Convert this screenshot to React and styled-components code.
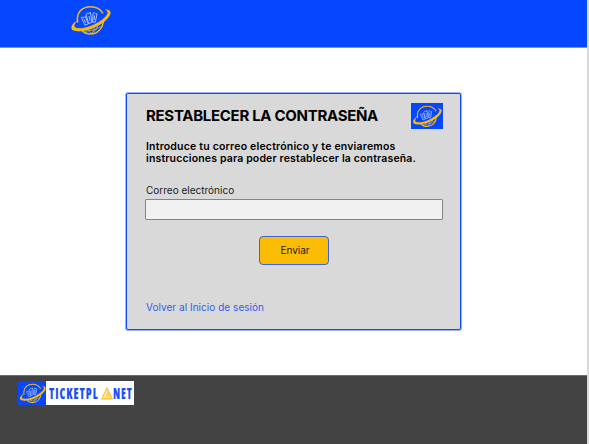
import React from "react";
import styled, { createGlobalStyle } from "styled-components";

const GlobalStyle = createGlobalStyle`
  *, *::before, *::after { box-sizing: border-box; }
  body { margin: 0; background: #fff; overflow: hidden; }
`;

const Page = styled.div`
  display: flex;
  flex-direction: column;
  width: 589px;
  height: 444px;
  border-right: 2px solid #d9d9d9;
  background: #fff;
  color: #000;
  font-family: Inter, "Noto Sans", sans-serif;
`;

const Header = styled.header`
  flex: 0 0 48px;
  padding: 5px 0 0 70px;
  background: #0546ff;
  border-bottom: 1px solid #6f93fb;
`;

const Main = styled.main`
  flex: 1;
  padding: 45px 0 0 126px;
`;

const Card = styled.section`
  width: 335px;
  height: 237px;
  padding: 9px 17px 0 19px;
  background: #d9d9d9;
  border: 1px solid #0f4bfb;
  border-radius: 2px;
  box-shadow: 0 0 0 1px rgba(34, 86, 245, 0.45);
`;

const CardHeader = styled.div`
  display: flex;
  justify-content: space-between;
  height: 38px;
`;

const Title = styled.h1`
  margin: 3px 0 0;
  font-size: 15px;
  line-height: 20px;
  font-weight: 700;
  letter-spacing: -0.3px;
  white-space: nowrap;
`;

const LogoTile = styled.div`
  display: flex;
  align-items: center;
  justify-content: center;
  flex: none;
  width: ${(p) => p.$width}px;
  height: ${(p) => p.$height}px;
  background: #0546ff;
`;

const Intro = styled.p`
  margin: 0;
  font-size: 10.5px;
  line-height: 12px;
  font-weight: 600;
  white-space: nowrap;
`;

const IntroLine = styled.span`
  display: block;
  letter-spacing: ${(p) => p.$spacing}px;
`;

const Label = styled.label`
  display: block;
  margin-top: 18px;
  font-size: 10px;
  line-height: 14px;
  color: #222;
`;

const Input = styled.input`
  display: block;
  width: 298px;
  height: 21px;
  margin: 2px 0 0 -1px;
  padding: 0 6px;
  background: #f1f1f1;
  border: 1px solid #858585;
  border-radius: 1px;
  font: inherit;
  font-size: 10px;
  outline: none;
`;

const Button = styled.button`
  display: block;
  width: 70px;
  height: 29px;
  margin: 16px 0 0 113px;
  padding: 0 0 0 2px;
  background: #fbbc05;
  border: 1px solid #3f66cf;
  border-radius: 4px;
  color: #222;
  font-family: inherit;
  font-size: 10px;
  line-height: 27px;
`;

const BackLink = styled.a`
  display: block;
  margin-top: 35px;
  font-size: 10px;
  line-height: 14px;
  letter-spacing: 0.04px;
  color: #2f60f4;
  text-decoration: none;
`;

const Footer = styled.footer`
  flex: 0 0 69px;
  padding: 5px 0 0 18px;
  background: #434343;
  border-top: 1px solid #6c6c6c;
`;

const Brand = styled.div`
  display: flex;
  width: 116px;
  height: 24px;
  background: #fff;
`;

const Drawing = styled.svg`
  display: block;
  flex: none;
`;

function Globe({ width, height }) {
  return (
    <Drawing width={width} height={height} viewBox="6 9 123 92" preserveAspectRatio="none" fill="none">
      <path
        d="M29 61 C24 33 41 14 68 14 C85 14 98 22 105 34 M107 53 C104 80 88 94 68 95 C57 95 48 91 42 85"
        stroke="#f4b81e" strokeWidth="4.5"
      />
      <path d="M50 87 Q78 87 104 71 M60 80 Q64 90 70 94 Q86 85 91 68 M79 76 Q80 86 70 94" stroke="#dfb23a" strokeWidth="2.4" />
      <path
        d="M111 23 C133 21 132 38 113 55 C88 77 45 92 18 85 C5 81 9 66 28 55 C17 67 15 76 28 78 C52 81 90 65 110 46 C121 36 123 27 111 23Z"
        fill="#fbbc05" stroke="#fbbc05" strokeWidth="0.6"
      />
      <path
        d="M40 46 L45 45 L47 47 L52 43 L61 65 L51 69Z M54 37 L59 33 L62 36 L67 30 L72 60 L62 64Z M75 34 L79 31 L83 35 L87 35 L82 60 L74 60Z M48 51 L53 62 M63 42 L66 56 M80 40 L78 54"
        stroke="#c3d3ff" strokeWidth="2.6" strokeLinejoin="round"
      />
    </Drawing>
  );
}

const Wordmark = styled.div`
  display: flex;
  align-items: center;
  padding-left: 3px;
  color: #1850f5;
  font-family: "Open Sans", sans-serif;
  font-size: 16px;
  font-weight: 800;
  font-stretch: 75%;
  letter-spacing: 1.4px;
  line-height: 24px;
`;

const WordPart = styled.span`
  display: block;
  flex: none;
  width: ${(p) => p.$width}px;
  white-space: nowrap;
`;

const Condensed = styled.span`
  display: inline-block;
  transform: scaleX(${(p) => p.$scale});
  transform-origin: left center;
`;

function PyramidMark() {
  return (
    <Drawing width="12" height="13" viewBox="0 0 12 13" fill="none" stroke="#f6c436">
      <path d="M6 1.2 L11 11.7 H1 Z" strokeWidth="1.4" />
      <path d="M6 4.2 L8.8 9.8 H3.2 M5 8 L6 6.4 L7 8 Z" strokeWidth="1" />
    </Drawing>
  );
}

export default function App() {
  return (
    <>
      <GlobalStyle />
      <Page>
        <Header>
          <Globe width={41} height={31} />
        </Header>
        <Main>
          <Card>
            <CardHeader>
              <Title>RESTABLECER LA CONTRASEÑA</Title>
              <LogoTile $width={32} $height={26}>
                <Globe width={30} height={23} />
              </LogoTile>
            </CardHeader>
            <Intro>
              <IntroLine $spacing={0.2}>Introduce tu correo electrónico y te enviaremos</IntroLine>
              <IntroLine $spacing={0.16}>instrucciones para poder restablecer la contraseña.</IntroLine>
            </Intro>
            <Label htmlFor="email">Correo electrónico</Label>
            <Input id="email" type="email" />
            <Button type="button">Enviar</Button>
            <BackLink href="#">Volver al Inicio de sesión</BackLink>
          </Card>
        </Main>
        <Footer>
          <Brand>
            <LogoTile $width={28} $height={24}>
              <Globe width={27} height={21} />
            </LogoTile>
            <Wordmark>
              <WordPart $width={52}>
                <Condensed $scale={0.71}>TICKETPL</Condensed>
              </WordPart>
              <PyramidMark />
              <WordPart $width={20}>
                <Condensed $scale={0.68}>NET</Condensed>
              </WordPart>
            </Wordmark>
          </Brand>
        </Footer>
      </Page>
    </>
  );
}
